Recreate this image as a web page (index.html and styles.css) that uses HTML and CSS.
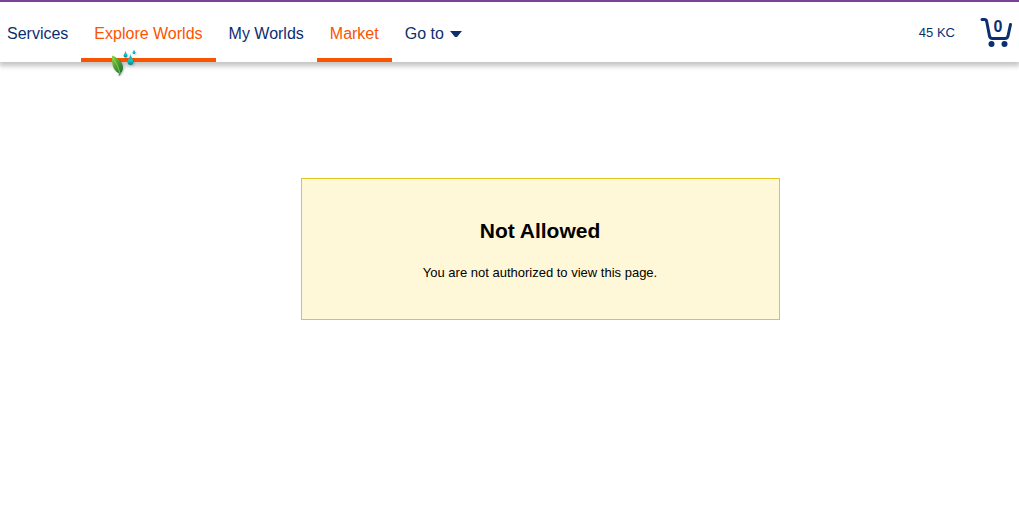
FILE: index.html
```html
<!DOCTYPE html>
<html lang="en">
<head>
<meta charset="utf-8">
<meta name="viewport" content="width=device-width, initial-scale=1">
<title>Not Allowed</title>
<link rel="stylesheet" href="styles.css">
</head>
<body>
<header class="topbar">
  <nav class="nav">
    <a class="nav-item" href="#">Services</a>
    <a class="nav-item active" href="#">Explore Worlds</a>
    <a class="nav-item" href="#">My Worlds</a>
    <a class="nav-item active" href="#">Market</a>
    <button class="nav-item" type="button">Go to
      <svg class="caret" viewBox="0 0 12 6" aria-hidden="true"><path d="M0 0h12L7 6H5z"/></svg>
    </button>
  </nav>
  <div class="account">
    <a class="balance" href="#">45 KC</a>
    <a class="cart" href="#" aria-label="Cart, 0 items">
      <svg class="cart-icon" viewBox="0 0 34 32" aria-hidden="true">
        <path d="M3 3.500H5.500Q7.300 3.500 7.700 5.500L10.500 20Q11 22.500 13.500 22.500H26Q28.500 22.500 29 20L31.500 8.500" fill="none" stroke="#0b2f6f" stroke-width="3" stroke-linecap="round" stroke-linejoin="round"/>
        <circle cx="12.500" cy="28" r="3" fill="#0b2f6f"/>
        <circle cx="25.500" cy="28" r="3" fill="#0b2f6f"/>
      </svg>
      <span class="cart-count">0</span>
    </a>
  </div>
  <svg class="pointer" viewBox="0 0 28 30" aria-hidden="true">
    <defs>
      <linearGradient id="leaf" x1="0" y1="0" x2="1" y2="1"><stop offset="0" stop-color="#8ed63c"/><stop offset=".5" stop-color="#4b9c35"/><stop offset="1" stop-color="#176b3a"/></linearGradient>
      <linearGradient id="drop" x1="0" y1="0" x2="0" y2="1"><stop offset="0" stop-color="#0b9aa5"/><stop offset=".6" stop-color="#18c4c8"/><stop offset="1" stop-color="#087f8e"/></linearGradient>
    </defs>
    <path d="M2 5.500C8 8 13.500 12 13 19Q12.500 22 10 24C4 21 1.500 17 2 5.500z" fill="url(#leaf)"/>
    <path d="M3 8Q8 15 10 23" fill="none" stroke="#a7df55" stroke-width=".7"/>
    <path d="M10 23.500V25H8.500" fill="none" stroke="#555f55"/>
    <path d="M20.500 3.500C20.500 7 17.500 9 17.500 12a3 3 0 0 0 6 0C23.500 9 20.500 7 20.500 3.500z" fill="url(#drop)"/>
    <path d="M15.500 .5C15.500 3 13.500 4 13.500 5.500a2 2 0 0 0 4 0C17.500 4 15.500 3 15.500 .5z" fill="url(#drop)"/>
    <path d="M24 0L22.500 2.500a1.500 1.500 0 0 0 3 0z" fill="url(#drop)"/>
  </svg>
</header>
<main class="page">
  <section class="notice">
    <h1 class="notice-title">Not Allowed</h1>
    <p class="notice-text">You are not authorized to view this page.</p>
  </section>
</main>
</body>
</html>
```

FILE: styles.css
```css
* { box-sizing: border-box; }
body {
  margin: 0;
  background: #fff;
  color: #000;
  font-family: "Liberation Sans", Arial, sans-serif;
}
.topbar {
  position: relative;
  display: flex;
  justify-content: space-between;
  height: 62px;
  border-top: 2px solid #7b4397;
  background: #fff;
  box-shadow: 0 3px 5px 1px rgba(0, 0, 0, .24);
}
.nav { display: flex; }
.nav-item {
  display: flex;
  align-items: center;
  gap: 6px;
  padding: 8px 13px 0;
  border: 0;
  border-bottom: 4px solid transparent;
  background: none;
  color: #0b2f6f;
  font: inherit;
  font-size: 16px;
  text-decoration: none;
  white-space: nowrap;
}
.nav-item:first-child { padding-left: 7px; }
.nav-item.active {
  color: #fa5400;
  border-bottom-color: #fa5400;
}
.caret { width: 12px; height: 6px; fill: #0b2f6f; }
.account {
  display: flex;
  align-items: center;
  gap: 24px;
  padding-right: 6px;
}
.balance {
  color: #0b2f6f;
  font-size: 13px;
  text-decoration: none;
}
.cart { position: relative; display: block; width: 34px; height: 32px; }
.cart-icon { display: block; width: 34px; height: 32px; }
.cart-count {
  position: absolute;
  top: 1px;
  left: 2px;
  width: 100%;
  color: #0b2f6f;
  font-size: 16px;
  font-weight: bold;
  line-height: 20px;
  text-align: center;
}
.pointer {
  position: absolute;
  top: 48px;
  left: 110px;
  width: 28px;
  height: 30px;
  filter: drop-shadow(1px 1px 1px rgba(0, 0, 0, .2));
  pointer-events: none;
}
.page {
  display: flex;
  justify-content: center;
  padding: 116px 0 0 61px;
}
.notice {
  width: 50%;
  min-width: 280px;
  padding: 40px 20px 37px;
  border: 1px solid #e0c820;
  background: #fff8d8;
  text-align: center;
}
.notice-title {
  margin: 0 0 21px;
  font-size: 21px;
  line-height: 24px;
}
.notice-text {
  margin: 0;
  font-size: 13px;
  line-height: 18px;
}
```
